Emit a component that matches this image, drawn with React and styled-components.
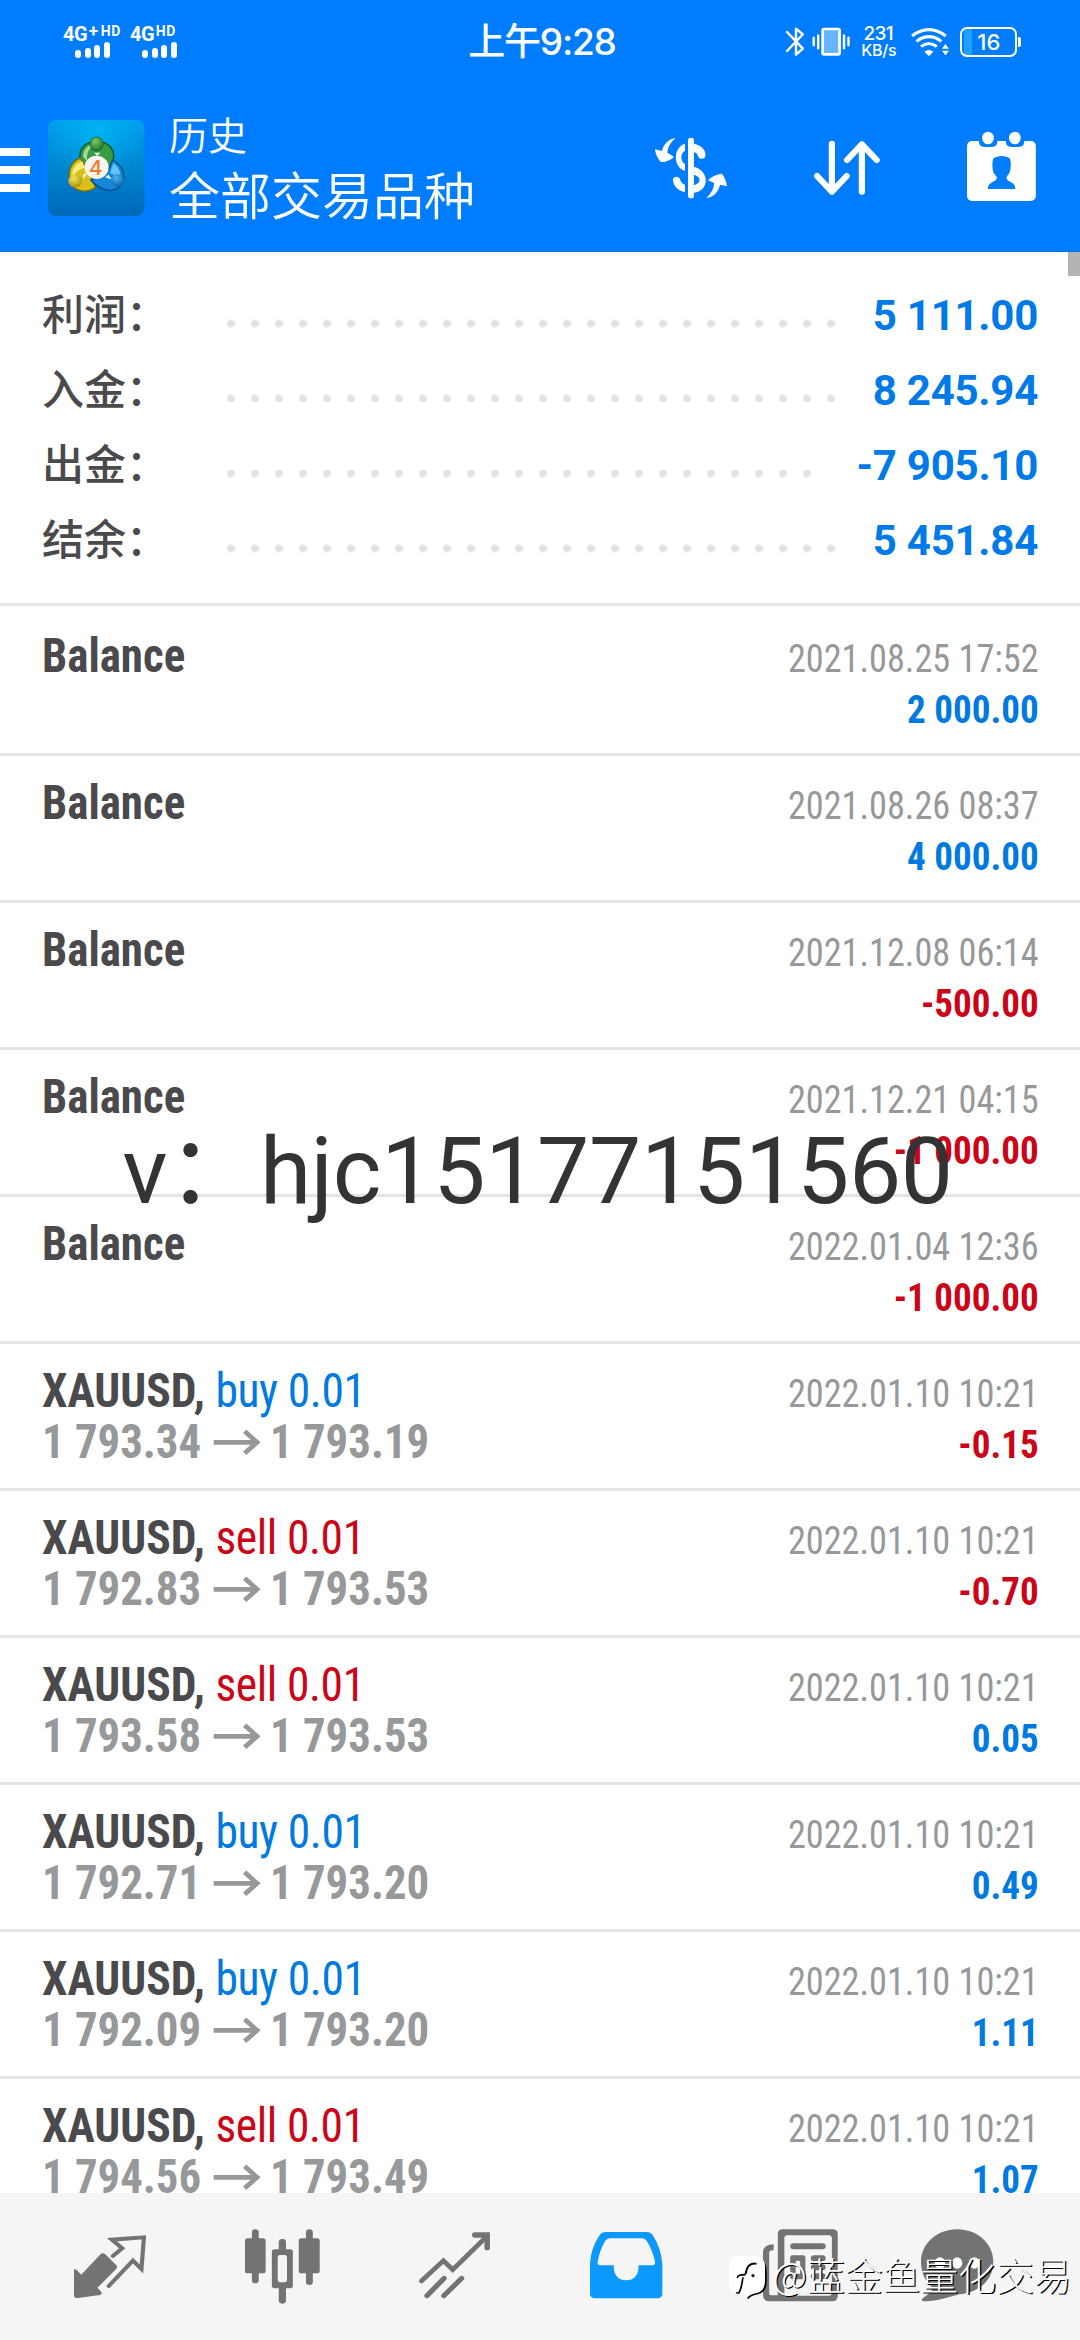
import React from "react";
import styled, { createGlobalStyle } from "styled-components";

const BLUE = "#007dff";
const GREY = "#737373";

const GlobalStyle = createGlobalStyle`
  * { box-sizing: border-box; }
  body { margin: 0; background: #fff; }
`;

const Screen = styled.div`
  position: relative;
  width: 1080px;
  height: 2340px;
  display: flex;
  flex-direction: column;
  overflow: hidden;
  background: #fff;
  font-family: Roboto, "Noto Sans CJK SC", sans-serif;
`;

const Header = styled.header`
  flex: none;
  height: 252px;
  background: ${BLUE};
  border-bottom: 1px solid #0872dc;
  color: #fff;
`;

/* status bar */
const StatusBar = styled.div`
  height: 84px;
  padding: 0 59.2px 0 63px;
  display: grid;
  grid-template-columns: 1fr auto 1fr;
  align-items: center;
`;
const Signals = styled.div`
  display: flex;
`;
const Signal = styled.div`
  display: flex;
  flex-direction: column;
  width: 67px;
`;
const SignalLabel = styled.div`
  display: flex;
  height: 16px;
  font: 700 20px/17px Roboto, sans-serif;
  letter-spacing: -0.4px;
  white-space: nowrap;
`;
const SignalSup = styled.span`
  font-size: ${(p) => p.$size || 14}px;
  line-height: 11px;
  margin-left: ${(p) => p.$gap || 1.5}px;
  letter-spacing: 0.6px;
`;
const Bars = styled.div`
  display: flex;
  align-items: flex-end;
  gap: 3.8px;
  height: 16px;
  padding-left: 12px;
`;
const Bar = styled.i`
  width: 5.9px;
  height: ${(p) => p.$h}px;
  border-radius: 3px;
  background: #fff;
`;
const Clock = styled.div`
  font: 500 37px/44px Inter, "Noto Sans CJK SC", sans-serif;
  letter-spacing: -1.2px;
`;
const StatusIcons = styled.div`
  display: flex;
  justify-content: flex-end;
  align-items: center;
`;
const Rate = styled.div`
  width: 34px;
  margin: 0 15.5px 0 10.3px;
  text-align: center;
  font: 500 19px/16px Inter, sans-serif;
  letter-spacing: -0.6px;
`;
const RateUnit = styled.div`
  font-size: 16px;
  letter-spacing: -0.2px;
`;
const Battery = styled.div`
  display: flex;
  align-items: center;
  margin-left: 11px;
`;
const BatteryCell = styled.div`
  width: 57px;
  height: 30px;
  border: 2px solid #fff;
  border-radius: 7px;
  background: linear-gradient(90deg, transparent 2px, #22a0ff 2px, #22a0ff 10px, transparent 10px);
  text-align: center;
  font: 500 22px/27px Inter, sans-serif;
`;
const BatteryTip = styled.div`
  width: 2.5px;
  height: 10px;
  margin-left: 1px;
  border-radius: 0 2px 2px 0;
  background: #fff;
`;

/* title bar */
const TitleBar = styled.div`
  height: 168px;
  display: flex;
  align-items: center;
  padding-right: 44.5px;
`;
const MenuButton = styled.div`
  width: 30px;
  display: flex;
  flex-direction: column;
  gap: 10px;
  margin-top: 4px;
`;
const MenuLine = styled.i`
  height: 8px;
  background: #fff;
`;
const Titles = styled.div`
  margin: -1px 0 0 25px;
  font-family: "Noto Sans CJK SC", sans-serif;
  white-space: nowrap;
`;
const Caption = styled.div`
  font-size: 39px;
  line-height: 50px;
  font-weight: 350;
`;
const Title = styled.div`
  font-size: 51px;
  line-height: 70px;
  font-weight: 350;
`;
const Actions = styled.div`
  display: flex;
  gap: 87px;
  margin-left: auto;
`;

/* content */
const Content = styled.main`
  position: relative;
  flex: 1;
  min-height: 0;
  overflow: hidden;
`;
const ScrollThumb = styled.div`
  position: absolute;
  right: 0;
  top: 0;
  width: 12px;
  height: 24px;
  background: #b4b4b4;
`;
const Summary = styled.section`
  height: 354px;
  padding: 26px 42px 0;
  border-bottom: 3px solid #e4e4e4;
`;
const SummaryRow = styled.div`
  display: flex;
  height: 75px;
  line-height: 75px;
  font-size: 42px;
`;
const SummaryLabel = styled.div`
  width: 176.5px;
  color: #4a4a4c;
  line-height: 67px;
  font-weight: 500;
  font-family: "Noto Sans CJK SC", sans-serif;
`;
const Leader = styled.div`
  width: ${(p) => p.$count * 24}px;
  background: radial-gradient(circle at 12px 45.5px, #e3e3e3 3.6px, transparent 4.3px) 0 0 / 24px 75px repeat-x;
`;
const SummaryValue = styled.div`
  margin-left: auto;
  color: #007ae8;
  font-weight: 700;
  letter-spacing: -0.25px;
`;

const List = styled.ul`
  list-style: none;
  margin: 0;
  padding: 3px 0 0;
`;
const Deal = styled.li`
  height: 147px;
  border-bottom: 3px solid #e4e4e4;
  padding: 21px 41.5px 0 42px;
  display: flex;
  justify-content: space-between;
  white-space: nowrap;
  font-family: "Roboto Condensed", Roboto, sans-serif;
  font-stretch: 75%;
  line-height: 51px;
`;
const DealLeft = styled.div`
  font-size: 48px;
`;
/* The list face is set a little narrower than the installed condensed cut. */
const Line = styled.div`
  transform: scaleX(${(p) => p.$k});
  transform-origin: ${(p) => p.$from || "left"} center;
`;
const Name = styled(Line)`
  color: #4a4a4c;
  font-weight: 700;
`;
const Side = styled.span`
  font-weight: 400;
  letter-spacing: -0.4px;
  color: ${(p) => (p.$side === "buy" ? "#007ae0" : "#cc0418")};
`;
const Prices = styled(Line)`
  display: flex;
  align-items: center;
  font-weight: 700;
  color: #969899;
`;
const ArrowBox = styled.span`
  display: flex;
  padding: 2px 11.4px 0 13.4px;
`;
const DealRight = styled.div`
  padding-top: 4px;
  font-size: 39px;
  text-align: right;
`;
const Time = styled(Line)`
  color: #969899;
  font-weight: 400;
`;
const Amount = styled(Line)`
  font-weight: 700;
  color: ${(p) => (p.$negative ? "#cc0418" : "#007ae0")};
`;

/* bottom navigation */
const Nav = styled.nav`
  flex: none;
  height: 147px;
  padding: 0 0 0 24px;
  display: grid;
  grid-template-columns: 172px 172px 172px 173px 174px 141px;
  background: #f5f5f5;
`;
const NavItem = styled.div`
  display: flex;
  justify-content: center;
  padding-top: 33.7px;
`;

const ContactMark = styled.div`
  position: absolute;
  left: 122.5px;
  top: 1117px;
  font-size: 93px;
  line-height: 110px;
  letter-spacing: -0.3px;
  color: #333;
  white-space: nowrap;
`;
const AuthorMark = styled.div`
  position: absolute;
  left: 727.5px;
  top: 2254px;
  display: flex;
  align-items: center;
  gap: 5px;
  color: #fff;
  white-space: nowrap;
`;
const AuthorName = styled.span`
  margin-top: -7px;
  font: 300 37.8px/46px "Noto Sans CJK SC", sans-serif;
  text-shadow: 1.3px 1.3px 0.4px #000;
`;

/* Glyph units are 2.904 per px across and 3 per px down. */
const Glyph = ({ x, y, w, h, ux = 2.904, children }) => (
  <svg
    width={w / ux}
    height={h / 3}
    viewBox={`${x} ${y} ${w} ${h}`}
    preserveAspectRatio="none"
    fill="#fff"
    style={{ display: "block", flex: "none", overflow: "visible" }}
  >
    {children}
  </svg>
);

const Gap = styled.i`
  width: ${(p) => p.$w}px;
`;

const BluetoothIcon = () => (
  <Glyph x={711} y={76} w={54} h={100}>
    <path d="M714 97 L760 147 L740 165 V87 L760 104 L714 154" fill="none" stroke="#fff" strokeWidth="7" strokeLinejoin="round" strokeLinecap="round" />
  </Glyph>
);
const VibrateIcon = () => (
  <Glyph x={789} y={76} w={112} h={100}>
    <rect x="820" y="88" width="49" height="76" rx="4" fill="#66b4ff" stroke="#fff" strokeWidth="8" />
    <path d="M807 107V146M794 114V137M882 107V146M895 114V137" stroke="#fff" strokeWidth="7" strokeLinecap="round" />
  </Glyph>
);
const WifiIcon = () => (
  <Glyph x={1075} y={76} w={112} h={100}>
    <g fill="none" stroke="#fff" strokeWidth="9">
      <path d="M1078 109 Q1127 71 1176 109" />
      <path d="M1091 125 Q1127 97 1163 125" />
      <path d="M1104 141 Q1127 122 1150 141" />
    </g>
    <path d="M1114 156 Q1127 146 1140 156 L1127 170Z" />
    <path d="M1165 147 L1175 133 L1185 147ZM1165 153 L1175 167 L1185 153Z" />
  </Glyph>
);

const LogoIcon = () => (
  <Glyph x={138} y={360} w={280} h={288}>
    <defs>
      <linearGradient id="tile" x1="0" y1="0" x2="0" y2="1">
        <stop offset="0" stopColor="#009ff0" />
        <stop offset="0.5" stopColor="#0086cf" />
        <stop offset="1" stopColor="#0067b8" />
      </linearGradient>
      <radialGradient id="shine" cx="0.5" cy="0.12" r="0.5">
        <stop offset="0" stopColor="#00c0f4" stopOpacity="0.7" />
        <stop offset="1" stopColor="#00b4f0" stopOpacity="0" />
      </radialGradient>
      <radialGradient id="green" cx="0.4" cy="0.3" r="0.8">
        <stop offset="0" stopColor="#7cc862" />
        <stop offset="1" stopColor="#126a28" />
      </radialGradient>
      <radialGradient id="gold" cx="0.4" cy="0.3" r="0.8">
        <stop offset="0" stopColor="#f4e25a" />
        <stop offset="1" stopColor="#a88600" />
      </radialGradient>
      <radialGradient id="azure" cx="0.4" cy="0.3" r="0.8">
        <stop offset="0" stopColor="#45b4ee" />
        <stop offset="1" stopColor="#055ea5" />
      </radialGradient>
    </defs>
    <rect x="138" y="360" width="280" height="288" rx="24" fill="url(#tile)" />
    <rect x="138" y="360" width="280" height="288" rx="24" fill="url(#shine)" />
    <path d="M174 360V648M210 360V648M372 360V648M138 480H418M138 600H418M138 560H418" stroke="#2aa6e6" strokeOpacity="0.12" strokeWidth="2" />
    <path d="M232 482 C226 448 244 424 279 424 C316 424 336 450 326 488 L308 512 L250 500Z" fill="#379b43" stroke="#0e5a2a" strokeWidth="4" />
    <path d="M240 472 C240 448 254 434 272 432 C252 450 250 466 252 482Z" fill="#a5dc93" />
    <path d="M232 474 C202 484 194 520 204 550 C216 576 254 580 276 562 L262 528 L246 500Z" fill="#d9c01a" stroke="#7a6a08" strokeWidth="4" />
    <path d="M238 484 C214 492 206 512 210 530 C222 512 232 506 246 504Z" fill="#f8ec7c" />
    <path d="M326 480 C356 496 366 530 350 554 C334 580 292 576 262 540 L290 530 L312 510Z" fill="#1687d6" stroke="#084e8c" strokeWidth="4" />
    <path d="M328 490 C346 504 350 520 346 530 L318 520Z" fill="#63c3f5" />
    <path d="M240 524 L250 520 L242 538ZM314 524 L322 538 L304 532ZM272 458 H290 L281 468Z" fill="#fff" />
    <ellipse cx="279" cy="432" rx="19" ry="21" fill="url(#green)" stroke="#0f5c26" strokeWidth="2" />
    <ellipse cx="217" cy="543" rx="20" ry="19" fill="url(#gold)" />
    <ellipse cx="340" cy="541" rx="19" ry="19" fill="url(#azure)" />
    <circle cx="279" cy="502" r="35" fill="#fbf7f0" />
    <text x="277" y="524" textAnchor="middle" fontFamily="Inter, sans-serif" fontSize="60" fontWeight="500" fill="#f47a2a">4</text>
  </Glyph>
);

const ExchangeIcon = () => (
  <Glyph x={331} y={390} w={210} h={228}>
    <rect x="427" y="413" width="17" height="182" rx="8" />
    <path d="M418 431 C384 442 382 500 418 513 V492 C404 482 404 460 418 452Z" />
    <path d="M444 431 C466 436 478 450 478 466 C477 478 462 480 457 471 C454 462 451 458 444 456Z" />
    <path d="M444 500 C490 512 490 572 444 578 V556 C466 549 466 530 444 524Z" />
    <path d="M418 577 C398 572 384 558 383 540 C385 527 401 528 404 539 C407 547 411 551 418 554Z" />
    <path d="M391 414 C372 416 356 432 351 453 L331 448 C332 462 340 478 348 486 C360 487 378 480 386 470 L367 458 C368 440 378 425 391 414Z" />
    <path d="M480 594 C500 592 515 576 520 554 L540 559 C539 545 533 530 525 521 C510 522 493 531 485 541 L503 549 C502 568 492 583 480 594Z" />
  </Glyph>
);
const SortIcon = () => (
  <Glyph x={793} y={390} w={191} h={228}>
    <path d="M845 431V575M802 528L845 575L888 528M932 575V433M889 480L932 433L975 480" fill="none" stroke="#fff" strokeWidth="18" strokeLinecap="round" strokeLinejoin="round" />
  </Glyph>
);
const PeriodIcon = () => (
  <Glyph x={1237} y={390} w={200} h={228}>
    <rect x="1237" y="423" width="200" height="180" rx="15" />
    <path d="M1272 422V428Q1274 441 1290 441H1306Q1323 441 1325 428V422ZM1350 422V428Q1352 441 1368 441H1384Q1401 441 1403 428V422Z" fill={BLUE} />
    <ellipse cx="1298" cy="414" rx="17" ry="19" />
    <ellipse cx="1376" cy="414" rx="17" ry="19" />
    <path d="M1298 567C1297 553 1308 547 1317 543C1326 538 1325 530 1319 525C1310 516 1309 490 1313 476C1326 465 1350 465 1362 476C1366 490 1365 516 1356 525C1350 530 1350 538 1358 543C1367 547 1378 553 1377 567Z" fill={BLUE} />
  </Glyph>
);

const ArrowIcon = () => (
  <Glyph x={621} y={255} w={133} h={86} ux={2.71}>
    <path d="M621 298H745M711 265L747 298L711 331" fill="none" stroke="#969899" strokeWidth="14" />
  </Glyph>
);

const QuotesIcon = () => (
  <Glyph x={215} y={200} w={209} h={240}>
    <path d="M292 282Q299 275 306 282L338 315Q342 320 338 325L283 382L294 394Q298 402 290 404L226 413Q215 414 215 403V327Q221 326 225 331L236 343Z" fill={GREY} />
    <path d="M328 287L355 264L325 238L418 231L411 326L386 301L316 377" fill="none" stroke={GREY} strokeWidth="12" strokeLinecap="round" />
  </Glyph>
);
const CandlesIcon = () => (
  <Glyph x={709} y={200} w={217} h={240}>
    <g fill={GREY}>
      <rect x="729" y="207" width="20" height="162" rx="10" />
      <rect x="709" y="234" width="60" height="105" rx="8" />
      <rect x="886" y="207" width="20" height="167" rx="10" />
      <rect x="865" y="234" width="61" height="105" rx="8" />
      <rect x="807" y="236" width="21" height="194" rx="10" />
      <rect x="787" y="267" width="61" height="117" rx="8" />
    </g>
    <rect x="804" y="284" width="27" height="82" rx="7" fill="#f5f5f5" />
  </Glyph>
);
const TrendIcon = () => (
  <Glyph x={1214} y={200} w={206} h={240}>
    <g fill="none" stroke={GREY} strokeLinecap="round">
      <path d="M1221 362L1285 301L1312 328L1405 234" strokeWidth="14" />
      <path d="M1376 224H1412V262" strokeWidth="16" />
      <path d="M1237 406L1287 354M1286 406L1338 354" strokeWidth="15" />
    </g>
  </Glyph>
);
const HistoryIcon = () => (
  <Glyph x={146} y={200} w={210} h={240}>
    <path d="M192 215H312Q322 215 328 224Q352 262 356 310V402Q355 413 344 414H158Q147 413 146 402V310Q148 264 174 224Q180 215 192 215Z" fill="#0d99fb" />
    <path d="M204 234H298Q306 235 311 242Q328 270 335 305Q335 315 326 315H287Q288 359 251 360Q214 359 215 315H176Q167 314 168 305Q174 270 190 242Q195 234 204 234Z" fill="#f5f5f5" />
  </Glyph>
);
const NewsIcon = () => (
  <Glyph x={646} y={200} w={217} h={240}>
    <path d="M677 252V270Q666 268 664 276V400Q664 405 676 405H689V220Q690 207 703 207H850Q863 208 863 220V408Q862 423 848 423H662Q647 421 646 404V275Q648 252 677 252Z" fill={GREY} />
    <rect x="708" y="225" width="138" height="181" rx="9" fill="#f5f5f5" />
    <g fill={GREY}>
      <rect x="725" y="249" width="103" height="18" rx="9" />
      <rect x="725" y="285" width="44" height="72" rx="6" />
      <rect x="785" y="285" width="43" height="18" rx="9" />
      <rect x="785" y="312" width="43" height="18" rx="9" />
      <rect x="785" y="339" width="43" height="18" rx="9" />
    </g>
    <rect x="741" y="301" width="13" height="40" rx="4" fill="#f5f5f5" />
  </Glyph>
);
const ChatIcon = () => (
  <Glyph x={1108} y={200} w={210} h={240}>
    <path d="M1213 207C1272 207 1318 250 1318 304C1318 360 1276 396 1220 402C1180 412 1150 424 1116 423Q1106 421 1114 413C1128 402 1140 394 1142 382C1120 364 1108 336 1108 304C1108 250 1155 207 1213 207Z" fill={GREY} />
    <g fill="#fff">
      <ellipse cx="1163" cy="308" rx="15" ry="17" />
      <ellipse cx="1213" cy="308" rx="15" ry="17" />
      <ellipse cx="1263" cy="308" rx="15" ry="17" />
    </g>
  </Glyph>
);
const BubbleIcon = () => (
  <Glyph x={22} y={84} w={120} h={138} ux={3}>
    <path d="M132 112Q138 120 138 140V168Q137 200 112 205Q92 208 82 220Q78 214 84 206L110 196Z" fill="#000" />
    <path d="M50 91H108Q133 95 133 122V166Q132 196 108 201Q90 204 80 213Q78 204 70 202H50Q25 198 25 172V120Q26 94 50 91Z" />
    <path d="M105 113C86 111 78 122 75 142" fill="none" stroke="#000" strokeWidth="6" strokeLinecap="round" />
    <path d="M50 156C51 147 58 146 75 146M67 154C64 172 62 192 54 201" fill="none" stroke="#000" strokeWidth="5" />
    <path d="M46 200L56 202" stroke="#000" strokeWidth="4" />
    <circle cx="97" cy="149" r="5" fill="#222" />
  </Glyph>
);

const summary = [
  ["利润：", "5 111.00", 26],
  ["入金：", "8 245.94", 26],
  ["出金：", "-7 905.10", 25],
  ["结余：", "5 451.84", 26],
];

const deals = [
  { time: "2021.08.25 17:52", amount: "2 000.00" },
  { time: "2021.08.26 08:37", amount: "4 000.00" },
  { time: "2021.12.08 06:14", amount: "-500.00" },
  { time: "2021.12.21 04:15", amount: "-1 000.00" },
  { time: "2022.01.04 12:36", amount: "-1 000.00" },
  { side: "buy", from: "1 793.34", to: "1 793.19", time: "2022.01.10 10:21", amount: "-0.15" },
  { side: "sell", from: "1 792.83", to: "1 793.53", time: "2022.01.10 10:21", amount: "-0.70" },
  { side: "sell", from: "1 793.58", to: "1 793.53", time: "2022.01.10 10:21", amount: "0.05" },
  { side: "buy", from: "1 792.71", to: "1 793.20", time: "2022.01.10 10:21", amount: "0.49" },
  { side: "buy", from: "1 792.09", to: "1 793.20", time: "2022.01.10 10:21", amount: "1.11" },
  { side: "sell", from: "1 794.56", to: "1 793.49", time: "2022.01.10 10:21", amount: "1.07" },
];

const SignalBars = () => (
  <Bars>
    {[8.5, 10, 13.5, 16].map((h) => (
      <Bar key={h} $h={h} />
    ))}
  </Bars>
);

export default function App() {
  return (
    <Screen>
      <GlobalStyle />
      <Header>
        <StatusBar>
          <Signals>
            <Signal>
              <SignalLabel>4G<SignalSup $size={17}>+</SignalSup><SignalSup $gap={2}>HD</SignalSup></SignalLabel>
              <SignalBars />
            </Signal>
            <Signal>
              <SignalLabel>4G<SignalSup>HD</SignalSup></SignalLabel>
              <SignalBars />
            </Signal>
          </Signals>
          <Clock>上午9:28</Clock>
          <StatusIcons>
            <BluetoothIcon />
            <Gap $w={8.3} />
            <VibrateIcon />
            <Rate>231<RateUnit>KB/s</RateUnit></Rate>
            <WifiIcon />
            <Battery>
              <BatteryCell>16</BatteryCell>
              <BatteryTip />
            </Battery>
          </StatusIcons>
        </StatusBar>
        <TitleBar>
          <MenuButton><MenuLine /><MenuLine /><MenuLine /></MenuButton>
          <Gap $w={17.5} />
          <LogoIcon />
          <Titles>
            <Caption>历史</Caption>
            <Title>全部交易品种</Title>
          </Titles>
          <Actions>
            <ExchangeIcon />
            <SortIcon />
            <PeriodIcon />
          </Actions>
        </TitleBar>
      </Header>

      <Content>
        <Summary>
          {summary.map(([label, value, dots]) => (
            <SummaryRow key={label}>
              <SummaryLabel>{label}</SummaryLabel>
              <Leader $count={dots} />
              <SummaryValue>{value}</SummaryValue>
            </SummaryRow>
          ))}
        </Summary>
        <List>
          {deals.map((d, i) => (
            <Deal key={i}>
              <DealLeft>
                {d.side ? (
                  <>
                    <Name $k={0.948}>XAUUSD, <Side $side={d.side}>{d.side} 0.01</Side></Name>
                    <Prices $k={0.933}>{d.from}<ArrowBox><ArrowIcon /></ArrowBox>{d.to}</Prices>
                  </>
                ) : (
                  <Name $k={0.936}>Balance</Name>
                )}
              </DealLeft>
              <DealRight>
                <Time $k={0.93} $from="right">{d.time}</Time>
                <Amount $k={0.95} $from="right" $negative={d.amount.startsWith("-")}>{d.amount}</Amount>
              </DealRight>
            </Deal>
          ))}
        </List>
        <ScrollThumb />
      </Content>

      <Nav>
        <NavItem><QuotesIcon /></NavItem>
        <NavItem><CandlesIcon /></NavItem>
        <NavItem><TrendIcon /></NavItem>
        <NavItem><HistoryIcon /></NavItem>
        <NavItem><NewsIcon /></NavItem>
        <NavItem><ChatIcon /></NavItem>
      </Nav>

      <ContactMark>v：hjc15177151560</ContactMark>
      <AuthorMark><BubbleIcon /><AuthorName>@蓝金鱼量化交易</AuthorName></AuthorMark>
    </Screen>
  );
}
